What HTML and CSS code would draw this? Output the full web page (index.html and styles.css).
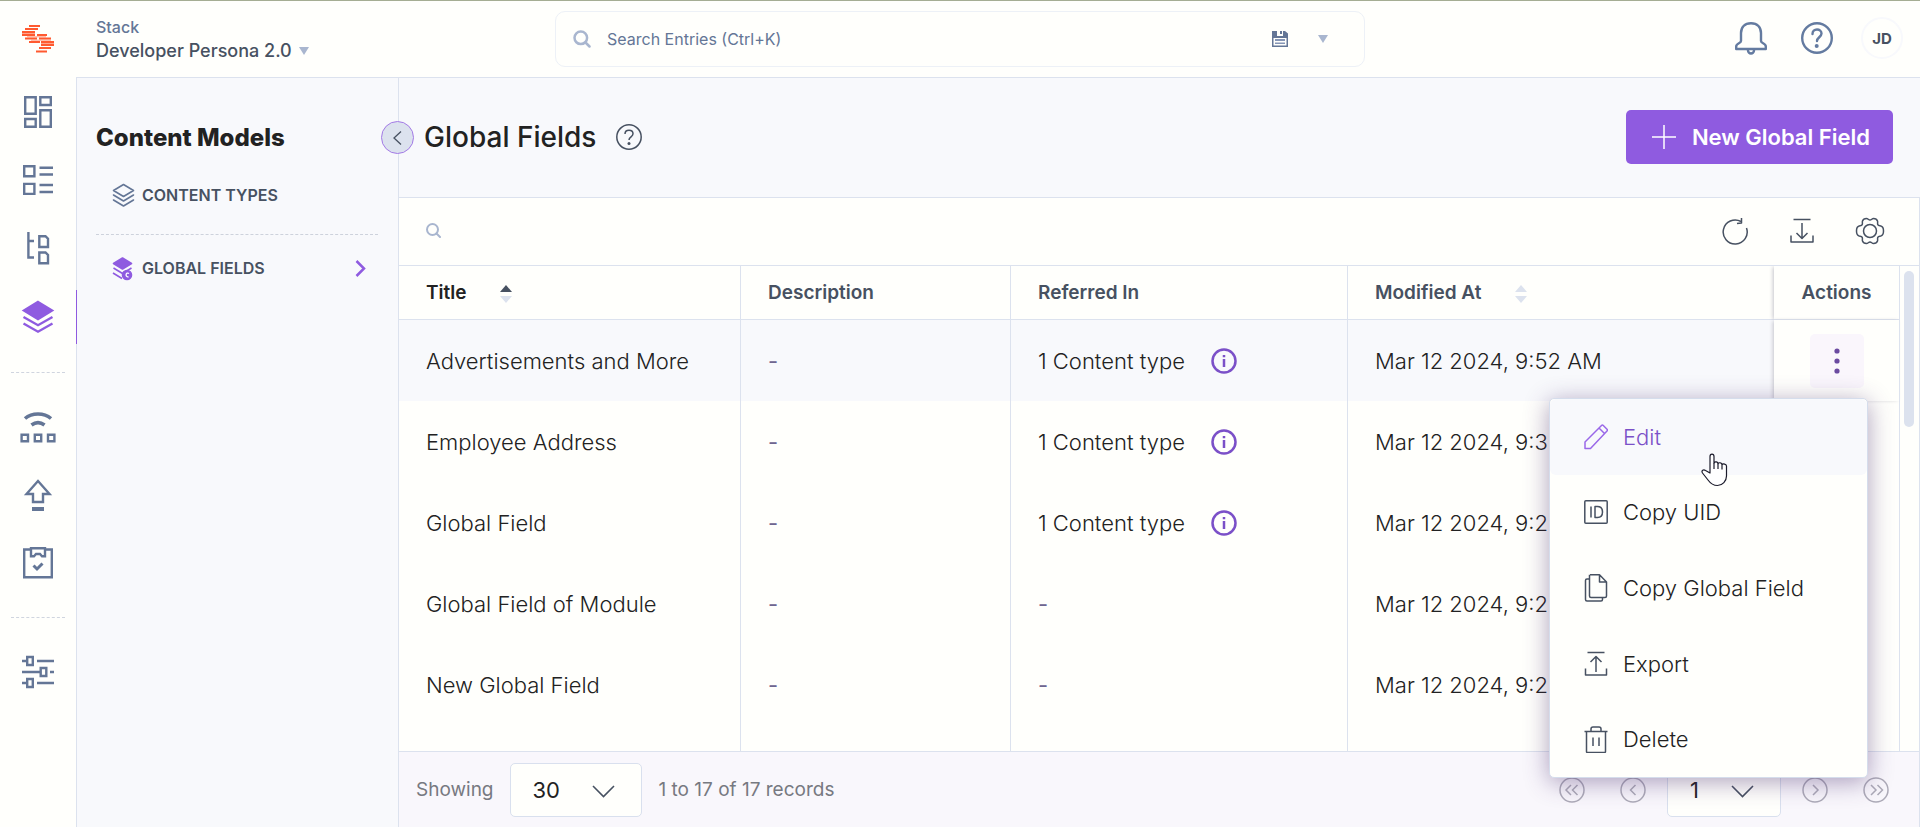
FILE: index.html
```html
<!DOCTYPE html>
<html lang="en">
<head>
<meta charset="utf-8">
<title>Global Fields</title>
<link rel="stylesheet" href="styles.css">
</head>
<body>
<div class="app">
  <header class="topbar">
    <div class="top-start">
      <a class="brand" href="#" aria-label="Home">
        <svg width="32" height="28" viewBox="0 0 32 28" fill="none" stroke="#ff5a30" stroke-width="2">
          <path d="M7 1h11M3 4h13M0 7h13M0 10h13M3 13.500h12M7 17h11"/>
          <path d="M15 10h10M17 13.500h12M19 17h13M19 20h13M17 23h12M14 26.500h11"/>
          <path d="M0 8.500h13M19 18.500h13M5 11.800h19M9 15.200h20" stroke-width="1" opacity=".55"/>
        </svg>
      </a>
      <button class="stack" type="button">
        <span class="stack-label">Stack</span>
        <span class="stack-name">Developer Persona 2.0 <i class="caret"></i></span>
      </button>
    </div>
    <div class="search">
      <svg width="18" height="18" viewBox="0 0 18 18" fill="none" stroke="#a9b6cf" stroke-width="2.500" stroke-linecap="round"><circle cx="7.800" cy="7.800" r="6.300"/><path d="M12.500 12.500l4 4"/></svg>
      <input class="search-input" type="text" aria-label="Search entries" placeholder="Search Entries (Ctrl+K)">
      <button class="icon-btn" type="button" aria-label="Saved searches">
        <svg width="16" height="16" viewBox="0 0 16 16"><path fill="#647696" d="M0 0h5v5h6V0h2l3 2.500V16H0z"/><path fill="#647696" d="M8 0h2v3H8z"/><path fill="#fffffc" d="M1.500 7h13v7.500h-13z"/><path fill="#8595b5" d="M3 8h10v2H3zM3 11.500h10v1.500H3z"/></svg>
      </button>
      <button class="icon-btn" type="button" aria-label="Search options"><i class="caret"></i></button>
    </div>
    <div class="top-actions">
      <button class="icon-btn" type="button" aria-label="Notifications">
        <svg width="32" height="33" viewBox="0 0 32 33" fill="none" stroke="#647ba0" stroke-width="2.400" stroke-linejoin="round"><path d="M16 1.200C9.500 1.200 6 5.500 6 11v8c0 2.500-4.800 2-4.800 5.500V27h29.600v-2.500c0-3.500-4.800-3-4.800-5.500v-8C26 5.500 22.500 1.200 16 1.200z"/><path d="M13 27.500v1a3 3 0 0 0 6 0v-1"/></svg>
      </button>
      <button class="icon-btn" type="button" aria-label="Help">
        <svg width="32" height="32" viewBox="0 0 32 32" fill="none" stroke="#647ba0" stroke-width="2.400"><circle cx="16" cy="16" r="14.800"/><path d="M11.500 12c0-2.800 2-4.500 4.500-4.500s4.500 1.600 4.500 4c0 3.500-4.500 4-4.500 7.500" stroke-linecap="round"/><circle cx="15.700" cy="24" r="2" fill="#647ba0" stroke="none"/></svg>
      </button>
      <button class="avatar" type="button">JD</button>
    </div>
  </header>

  <div class="workspace">
    <nav class="rail" aria-label="Main">
      <a class="rail-item" href="#" aria-label="Dashboard"><svg width="36" height="36" viewBox="0 0 36 36"><path d="M5.200 3.200h10.500v16.600H5.200zM20.300 3.200h10.500v7.800H20.300zM5.200 25h10.500v7.800H5.200zM20.300 16.200h10.500v16.600H20.300z"/></svg></a>
      <a class="rail-item" href="#" aria-label="Entries"><svg width="36" height="36" viewBox="0 0 36 36"><path d="M4.200 4.200h10.200v10H4.200zM4.200 21.900h10.200v10H4.200z"/><path d="M19.500 5.700H33M19.500 12.500H33M19.500 23H33M19.500 30H33"/></svg></a>
      <a class="rail-item" href="#" aria-label="Taxonomy"><svg width="36" height="36" viewBox="0 0 36 36"><path d="M8.400 2v25.500H14M8.400 11H14M19.300 6.200h6.200l2.500 2.500v8.300h-8.700zM19.300 22.500h6.200L28 25v8.300h-8.700z"/></svg></a>
      <a class="rail-item active" href="#" aria-label="Content models"><svg width="36" height="36" viewBox="0 0 36 36"><path class="solid" d="M18 3l14 8.500L18 20 4 11.500z"/><path d="M3.500 18L18 26.200 32.500 18M3.500 24.500L18 32.700l14.500-8.200"/></svg></a>
      <hr class="rail-rule">
      <a class="rail-item" href="#" aria-label="Live preview"><svg width="36" height="36" viewBox="0 0 36 36"><path d="M5 9.500c7-6 19-6 26 0" stroke-width="3.600"/><path d="M11.500 16c4-3 9-3 13 0" stroke-width="3.600"/><path d="M1.600 25.800h6.400v6.400H1.600zM14.800 25.800h6.400v6.400h-6.400zM28 25.800h6.400v6.400H28z"/></svg></a>
      <a class="rail-item" href="#" aria-label="Releases"><svg width="36" height="36" viewBox="0 0 36 36"><path d="M18 4L6.500 17H13v8h10v-8h6.500z"/><path d="M12 32h12" stroke-width="4"/></svg></a>
      <a class="rail-item" href="#" aria-label="Tasks"><svg width="36" height="36" viewBox="0 0 36 36"><path d="M10.500 4.500H4.200v27.800h27.600V4.500h-6.300M11 3.200h14v8h-3l-2-2.200h-4l-2 2.200h-3z"/><path d="M13.500 20.500l3.500 3.500 5.500-5.500" stroke-width="3"/></svg></a>
      <hr class="rail-rule">
      <a class="rail-item" href="#" aria-label="Settings"><svg width="36" height="36" viewBox="0 0 36 36"><path d="M2 7h5M7.200 3h5.600v8H7.200zM17 7h17M2 18h18M20.700 14h5.600v8h-5.600zM30 18h4M2 29h5M7.200 25h5.600v8H7.200zM17 29h17"/></svg></a>
    </nav>

    <aside class="models">
      <h2 class="models-title">Content Models</h2>
      <button class="collapse" type="button" aria-label="Collapse panel"><svg width="9" height="14" viewBox="0 0 9 14" fill="none" stroke="#475161" stroke-width="1.300"><path d="M8 .5L1 7l7 6.500"/></svg></button>
      <a class="model" href="#">
        <svg width="23" height="25" viewBox="0 0 23 25" fill="none" stroke="#647696" stroke-width="1.600" stroke-linejoin="round" stroke-linecap="round"><path d="M11.500 1.500l10 6-10 6-10-6zM1.500 12l10 6 10-6M1.500 17l10 6 10-6"/></svg>
        <span>CONTENT TYPES</span>
      </a>
      <hr class="models-rule">
      <a class="model" href="#">
        <svg width="23" height="25" viewBox="0 0 23 25" fill="none" stroke="#8f5be0" stroke-width="1.600" stroke-linejoin="round"><path fill="#8f5be0" d="M10.500 2l9 5.500-9 5.500-9-5.500z"/><path d="M1.500 12l9 5.500 9-5.500M1 17l9 5.500"/><circle cx="15" cy="19" r="4.500" fill="#8f5be0"/><path stroke="#fff" stroke-width="1.300" d="M17 17.500c-3-2-4.500 3.500-.5 3.500"/></svg>
        <span>GLOBAL FIELDS</span>
        <svg class="model-arrow" width="11" height="17" viewBox="0 0 11 17" fill="none" stroke="#8f5be0" stroke-width="2.500"><path d="M1.500 1l7.500 7.500L1.500 16"/></svg>
      </a>
    </aside>

    <main class="main">
      <div class="page-head">
        <h1 class="page-title">Global Fields</h1>
        <button class="icon-btn" type="button" aria-label="About global fields">
          <svg width="26" height="26" viewBox="0 0 26 26" fill="none" stroke="#475161" stroke-width="1.500"><circle cx="13" cy="13" r="12.200"/><path d="M9 10c0-2.300 1.700-3.700 4-3.700s4 1.400 4 3.500c0 3-4 3-4 6.200"/><circle cx="13" cy="19.500" r="1.500" fill="#475161" stroke="none"/></svg>
        </button>
        <button class="new-btn" type="button">
          <svg width="24" height="24" viewBox="0 0 24 24" stroke="#fff" stroke-width="1.500"><path d="M12 0v24M0 12h24"/></svg>
          New Global Field
        </button>
      </div>

      <section class="panel">
        <div class="toolbar">
          <svg width="15" height="15" viewBox="0 0 15 15" fill="none" stroke="#a9b6cf" stroke-width="2" stroke-linecap="round"><circle cx="6.500" cy="6.500" r="5.500"/><path d="M10.500 10.500l3.500 3.500"/></svg>
          <input class="filter-input" type="text" aria-label="Search global fields">
          <button class="icon-btn" type="button" aria-label="Refresh"><svg class="line" width="28" height="28" viewBox="0 0 28 28"><path d="M25.500 11A12 12 0 1 1 20 4.500"/><path d="M20.500 1v5l-4.500.500"/></svg></button>
          <button class="icon-btn" type="button" aria-label="Import"><svg class="line" width="28" height="28" viewBox="0 0 28 28"><path d="M5.500 2.500h17M14 6v15M8.500 16l5.500 5.500L19.500 16M3 18.500V25h22v-6.500"/></svg></button>
          <button class="icon-btn" type="button" aria-label="Table settings"><svg class="line" width="30" height="28" viewBox="0 0 30 28"><path d="M11.500 1.500c1.500 0 2 1.500 3.500 1.500s2-1.500 3.500-1.500c1.600 0 3.500 1 4 2.500s-.3 2.500.3 3.700 1.700 1 3 1.300c1.500.4 2.700 2.500 2.700 5s-1.200 4.600-2.700 5c-1.300.3-2.400.1-3 1.300s.2 2.200-.3 3.700-2.400 2.500-4 2.500c-1.500 0-2-1.500-3.500-1.500s-2 1.500-3.500 1.500c-1.600 0-3.500-1-4-2.500s.3-2.500-.3-3.700-1.700-1-3-1.300C2.700 18.600 1.500 16.500 1.500 14s1.200-4.600 2.700-5c1.300-.3 2.400-.1 3-1.300S7 5.500 7.500 4s2.400-2.500 4-2.500z"/><circle cx="15" cy="14" r="6.500"/></svg></button>
        </div>
        <div class="grid">
          <table class="table">
            <colgroup><col class="c-title"><col class="c-desc"><col class="c-ref"><col class="c-mod"><col class="c-act"></colgroup>
            <thead>
              <tr>
                <th class="sorted">Title <i class="sort up"></i></th>
                <th>Description</th>
                <th>Referred In</th>
                <th>Modified At <i class="sort"></i></th>
                <th class="actions">Actions</th>
              </tr>
            </thead>
            <tbody>
              <tr class="hover"><td>Advertisements and More</td><td class="empty">-</td><td><span class="ref">1 Content type <svg class="info" width="26" height="26" viewBox="0 0 26 26"><circle cx="13" cy="13" r="11.500"/><path d="M13 11v8M13 7v2.200"/></svg></span></td><td>Mar 12 2024, 9:52 AM</td>
                <td class="actions">
                  <button class="more" type="button" aria-label="Row actions"><svg width="6" height="26" viewBox="0 0 6 26" fill="#6b4aa0"><circle cx="3" cy="3" r="2.600"/><circle cx="3" cy="13" r="2.600"/><circle cx="3" cy="23" r="2.600"/></svg></button>
                  <div class="menu" role="menu">
                    <button class="menu-item current" type="button" role="menuitem"><svg class="line" width="24" height="26" viewBox="0 0 24 26"><path d="M1 24.500V18L17.500 1.500c.6-.6 1.200-.6 1.800 0L23 5.200c.6.600.6 1.200 0 1.800L6.500 24.500zM15 4l5.500 5.500"/></svg>Edit</button>
                    <button class="menu-item" type="button" role="menuitem"><svg class="line" width="24" height="26" viewBox="0 0 24 26"><rect x=".8" y="1.800" width="22.400" height="22.400" rx="1"/><path d="M7 7.500v11M11 7.500v11h2.500c3 0 5-2 5-5.500s-2-5.500-5-5.500z"/></svg>Copy UID</button>
                    <button class="menu-item" type="button" role="menuitem"><svg class="line" width="24" height="28" viewBox="0 0 24 28"><path d="M6 .8h9.500L22.500 8v14c0 1-.5 1.500-1.500 1.500H7c-1 0-1.500-.5-1.500-1.500V.8M15.500.8V8h7M5.500 5H3c-1 0-1.500.5-1.500 1.500v19c0 1 .5 1.500 1.500 1.500h14c1 0 1.500-.5 1.500-1.500v-2"/></svg>Copy Global Field</button>
                    <button class="menu-item" type="button" role="menuitem"><svg class="line" width="24" height="26" viewBox="0 0 24 26"><path d="M3.500 1.500h17M12 21V6M6.500 11L12 5.500l5.500 5.500M1.500 17.500V24h21v-6.500"/></svg>Export</button>
                    <button class="menu-item" type="button" role="menuitem"><svg class="line" width="24" height="27" viewBox="0 0 24 27"><path d="M.5 5.500h23M2.500 5.500v20c0 .6.400 1 1 1h17c.6 0 1-.4 1-1v-20M7 5V3c0-1.300.7-2 2-2h6c1.300 0 2 .7 2 2v2M9 11.500V20M15 11.500V20"/></svg>Delete</button>
                    <svg class="cursor" width="27" height="34" viewBox="0 0 27 34" fill="#fff" stroke="#1b1b2b" stroke-width="1.200" stroke-linejoin="round"><path d="M9 20V3.500c0-3.200 4-3.200 4 0V10c1-1.800 4-1.200 4 .7.700-1.500 4-1.200 4 .8 1-1.200 4.500-.5 4.500 1.500V23c0 5-4 9.500-9 9.500-4 0-7-2-9.500-5.500L1.500 20c-1.500-2.500 1-4 3-2.500z"/><path d="M13 10v6M17 10.700V16M21 11.500V16.500"/></svg>
                  </div>
                </td></tr>
              <tr><td>Employee Address</td><td class="empty">-</td><td><span class="ref">1 Content type <svg class="info" width="26" height="26" viewBox="0 0 26 26"><circle cx="13" cy="13" r="11.500"/><path d="M13 11v8M13 7v2.200"/></svg></span></td><td>Mar 12 2024, 9:3</td><td class="actions"></td></tr>
              <tr><td>Global Field</td><td class="empty">-</td><td><span class="ref">1 Content type <svg class="info" width="26" height="26" viewBox="0 0 26 26"><circle cx="13" cy="13" r="11.500"/><path d="M13 11v8M13 7v2.200"/></svg></span></td><td>Mar 12 2024, 9:2</td><td class="actions"></td></tr>
              <tr><td>Global Field of Module</td><td class="empty">-</td><td class="empty">-</td><td>Mar 12 2024, 9:2</td><td class="actions"></td></tr>
              <tr><td>New Global Field</td><td class="empty">-</td><td class="empty">-</td><td>Mar 12 2024, 9:2</td><td class="actions"></td></tr>
              <tr class="filler"><td></td><td></td><td></td><td></td><td class="actions"></td></tr>
            </tbody>
          </table>
          <div class="scroll"><div class="thumb"></div></div>
        </div>
        <footer class="pager">
          <label class="pager-label" for="page-size">Showing</label>
          <span class="select-box size"><select id="page-size"><option>30</option></select><svg width="23" height="13" viewBox="0 0 23 13"><path d="M1 1l10.500 10.500L22 1"/></svg></span>
          <span class="pager-label">1 to 17 of 17 records</span>
          <div class="pages">
            <button class="icon-btn" type="button" aria-label="First page"><svg class="page" width="26" height="26" viewBox="0 0 26 26"><circle cx="13" cy="13" r="12"/><path d="M12 8l-5 5 5 5M18.500 8l-5 5 5 5"/></svg></button>
            <button class="icon-btn" type="button" aria-label="Previous page"><svg class="page" width="26" height="26" viewBox="0 0 26 26"><circle cx="13" cy="13" r="12"/><path d="M15.500 8l-5 5 5 5"/></svg></button>
            <span class="select-box num"><select aria-label="Page"><option>1</option></select><svg width="23" height="13" viewBox="0 0 23 13"><path d="M1 1l10.500 10.500L22 1"/></svg></span>
            <button class="icon-btn" type="button" aria-label="Next page"><svg class="page" width="26" height="26" viewBox="0 0 26 26"><circle cx="13" cy="13" r="12"/><path d="M11 8l5 5-5 5"/></svg></button>
            <button class="icon-btn" type="button" aria-label="Last page"><svg class="page" width="26" height="26" viewBox="0 0 26 26"><circle cx="13" cy="13" r="12"/><path d="M8 8l5 5-5 5M14.500 8l5 5-5 5"/></svg></button>
          </div>
        </footer>
      </section>
    </main>
  </div>
</div>
</body>
</html>
```
FILE: styles.css
```css
:root {
  --paper: #fffffc;
  --soft: #f8f9fc;
  --line: #dce2ee;
  --ink: #222222;
  --slate: #475161;
  --steel: #647696;
  --purple: #8f5be0;
}
* { box-sizing: border-box; }
body {
  margin: 0;
  background: var(--paper);
  color: var(--ink);
  font-family: Inter, "Liberation Sans", sans-serif;
}
svg { display: block; flex: none; }
a { color: inherit; text-decoration: none; }
button, input, select { font: inherit; color: inherit; background: none; border: 0; padding: 0; outline: 0; }
button { display: flex; align-items: center; justify-content: center; cursor: pointer; }

.app { display: flex; flex-direction: column; height: 100vh; border-top: 1px solid #a5ad93; overflow: hidden; }

.topbar { display: grid; grid-template-columns: 1fr minmax(0, 810px) 1fr; height: 76px; flex: none; align-items: center; }
.top-start { display: flex; align-items: center; }
.brand { display: flex; justify-content: center; width: 76px; }
.stack { flex-direction: column; align-items: flex-start; padding-left: 20px; text-align: left; }
.stack-label { font-size: 16px; line-height: 24px; font-weight: 500; color: var(--steel); }
.stack-name { display: flex; align-items: center; gap: 7px; font-size: 18px; line-height: 24px; font-weight: 500; color: var(--slate); white-space: nowrap; }
.caret { border: 5px solid transparent; border-top: 8px solid #a9b6cf; border-bottom: 0; }
.search { display: flex; align-items: center; gap: 16px; height: 56px; padding: 0 36px 0 17px; border: 1px solid #edf1f7; border-radius: 10px; }
.search-input { flex: 1; min-width: 0; font-size: 16px; }
.search-input::placeholder { color: var(--steel); opacity: 1; }
.search .icon-btn + .icon-btn { margin-left: 14px; }
.top-actions { display: flex; align-items: center; justify-content: flex-end; gap: 34px; padding: 0 17px 2px 0; }
.avatar { width: 42px; height: 42px; margin-left: -6px; border: 2px solid var(--soft); border-radius: 50%; font-size: 15px; font-weight: 700; color: var(--slate); }

.workspace { display: flex; flex: 1; min-height: 0; }
.rail { width: 76px; flex: none; padding-top: 9px; }
.rail-item { display: flex; align-items: center; justify-content: center; height: 52px; margin-bottom: 16px; color: var(--steel); }
.rail-item svg { fill: none; stroke: currentColor; stroke-width: 2.4; }
.rail-item.active { color: var(--purple); width: 77px; height: 54px; border-right: 1px solid var(--purple); position: relative; z-index: 1; }
.rail-item .solid { fill: currentColor; }
.rail-rule { margin: 28px 11px; border: 0; border-top: 1px dashed #d0d5df; }

.models { position: relative; width: 323px; flex: none; padding: 44px 20px 0 19px; background: var(--soft); border: 1px solid var(--line); border-bottom: 0; }
.models-title { margin: 0 0 26px; font-size: 24px; line-height: 32px; font-weight: 800; }
.collapse { position: absolute; top: 43px; right: -16px; width: 33px; height: 33px; border: 1px solid #a37ae6; border-radius: 50%; background: #dce2ee; z-index: 2; }
.model { display: flex; align-items: center; gap: 7px; height: 30px; padding: 0 12px 0 16px; font-size: 16px; font-weight: 600; color: var(--slate); }
.model-arrow { margin-left: auto; }
.models-rule { margin: 24px 0 18px; border: 0; border-top: 1px dashed #cdd2dc; }

.main { display: flex; flex-direction: column; flex: 1; min-width: 0; border-top: 1px solid var(--line); }
.page-head { display: flex; align-items: center; gap: 20px; height: 119px; flex: none; padding: 0 27px 2px 25px; background: var(--soft); }
.page-title { margin: 0; font-size: 28px; line-height: 36px; font-weight: 500; }
.new-btn { gap: 16px; height: 54px; margin-left: auto; padding: 0 23px 0 26px; border-radius: 5px; background: var(--purple); color: #fff; font-size: 22px; font-weight: 600; }

.panel { display: flex; flex-direction: column; flex: 1; min-height: 0; border: 1px solid var(--line); border-width: 1px 1px 0 0; }
.toolbar { display: flex; align-items: center; gap: 39px; height: 68px; flex: none; padding: 0 34px 2px 27px; border-bottom: 1px solid var(--line); }
.filter-input { flex: 1; min-width: 0; height: 40px; }
.line { fill: none; stroke: var(--slate); stroke-width: 1.5; stroke-linejoin: round; }

.grid { display: flex; flex: 1; min-height: 0; }
.table { flex: 1; width: 100%; height: 100%; table-layout: fixed; border-collapse: separate; border-spacing: 0; }
.c-title { width: 342px; }
.c-desc { width: 270px; }
.c-ref { width: 337px; }
.c-act { width: 126px; }
.table th, .table td { padding: 0 0 0 27px; border-right: 1px solid var(--line); text-align: left; white-space: nowrap; }
.table th { height: 54px; border-bottom: 1px solid var(--line); font-size: 19px; font-weight: 600; color: var(--slate); }
.table th.sorted { color: var(--ink); }
.table td { height: 81px; font-size: 22px; font-weight: 300; }
.table td.empty { color: #6f6690; font-weight: 400; }
.table .filler td { height: auto; }
.table th:nth-child(4), .table td:nth-child(4) { border-right: 0; }
.table .hover td { background: var(--soft); }
.table .actions { position: relative; padding: 0; text-align: center; background: var(--paper); box-shadow: -2px 0 4px -1px #c4c4cc; clip-path: inset(0 0 0 -6px); }
.table .hover .actions { background: var(--paper); clip-path: none; z-index: 3; }
.sort { position: relative; display: inline-block; width: 12px; height: 18px; margin-left: 29px; vertical-align: middle; }
.sort::before, .sort::after { content: ""; position: absolute; left: 0; border: 6px solid transparent; }
.sort::before { top: 0; border-top: 0; border-bottom: 7px solid #dce2ee; }
.sort::after { bottom: 0; border-bottom: 0; border-top: 7px solid #dce2ee; }
.sort.up::before { border-bottom-color: #475161; }
.ref { display: flex; align-items: center; gap: 26px; }
.info { fill: none; stroke: #7b50c8; stroke-width: 2.5; }
.more { width: 54px; height: 54px; margin: 0 auto; border-radius: 5px; background: #faf6fc; }
.scroll { width: 19px; flex: none; padding: 5px 4px; }
.thumb { width: 10px; height: 156px; border-radius: 5px; background: #dce2ee; }

.menu { position: absolute; top: 78px; right: 31px; display: grid; grid-auto-rows: 1fr; width: 319px; height: 380px; border: 1px solid #d5ddec; border-radius: 5px; background: var(--paper); box-shadow: 0 4px 24px rgba(70, 45, 110, .45); }
.menu-item { justify-content: flex-start; gap: 15px; padding-left: 34px; border-radius: 6px; font-size: 22px; font-weight: 300; }
.menu-item.current { background: var(--soft); color: #7b50c8; }
.menu-item.current .line { stroke: #9a68e8; }
.cursor { position: absolute; left: 151px; top: 54px; }

.pager { display: flex; align-items: center; height: 76px; flex: none; padding: 0 30px 0 17px; background: #f9f7fc; border-top: 1px solid var(--line); }
.pager-label { font-size: 19px; font-weight: 400; color: #777981; }
.select-box { position: relative; display: block; border: 1px solid #d9e0ee; border-radius: 5px; background: var(--paper); }
.select-box select { appearance: none; width: 100%; height: 52px; padding-left: 22px; font-size: 22px; }
.select-box svg { position: absolute; right: 26px; top: 21px; fill: none; stroke: var(--slate); stroke-width: 1.6; pointer-events: none; }
.size { width: 132px; margin: 0 17px 0 16px; }
.num { width: 114px; }
.pages { display: flex; align-items: center; margin-left: auto; gap: 35px; }
.pages .num { margin: 0 -14px; }
.page { fill: none; stroke: #adabb8; stroke-width: 1.5; }
```
